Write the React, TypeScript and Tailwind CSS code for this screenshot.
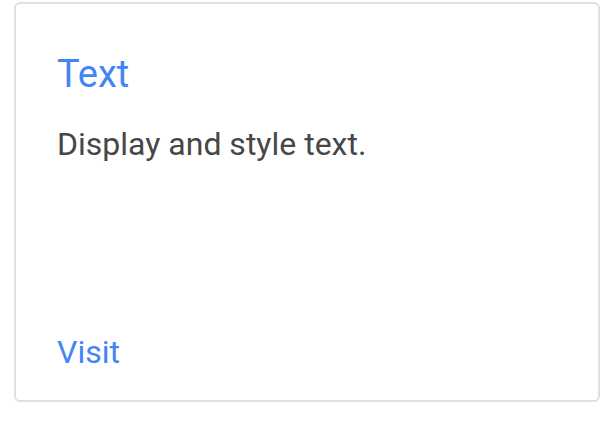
import React from 'react';

const App: React.FC = () => {
  return (
    <div className="w-[606px] h-[424px] bg-white pt-[2px] pl-[14px] font-['Roboto',sans-serif]">
      <div className="w-[586px] h-[400px] border-2 border-[#e0e0e0] rounded-[6px] bg-white flex flex-col px-[41px] pt-[46px] pb-[28px]">
        <h3 className="text-[38px] leading-[48px] text-[#4285f4] font-normal">Text</h3>
        <p className="mt-[26px] text-[32px] leading-[40px] text-[#474747]">Display and style text.</p>
        <a className="mt-auto text-[32px] leading-[40px] text-[#4285f4] self-start">Visit</a>
      </div>
    </div>
  );
};

export default App;
